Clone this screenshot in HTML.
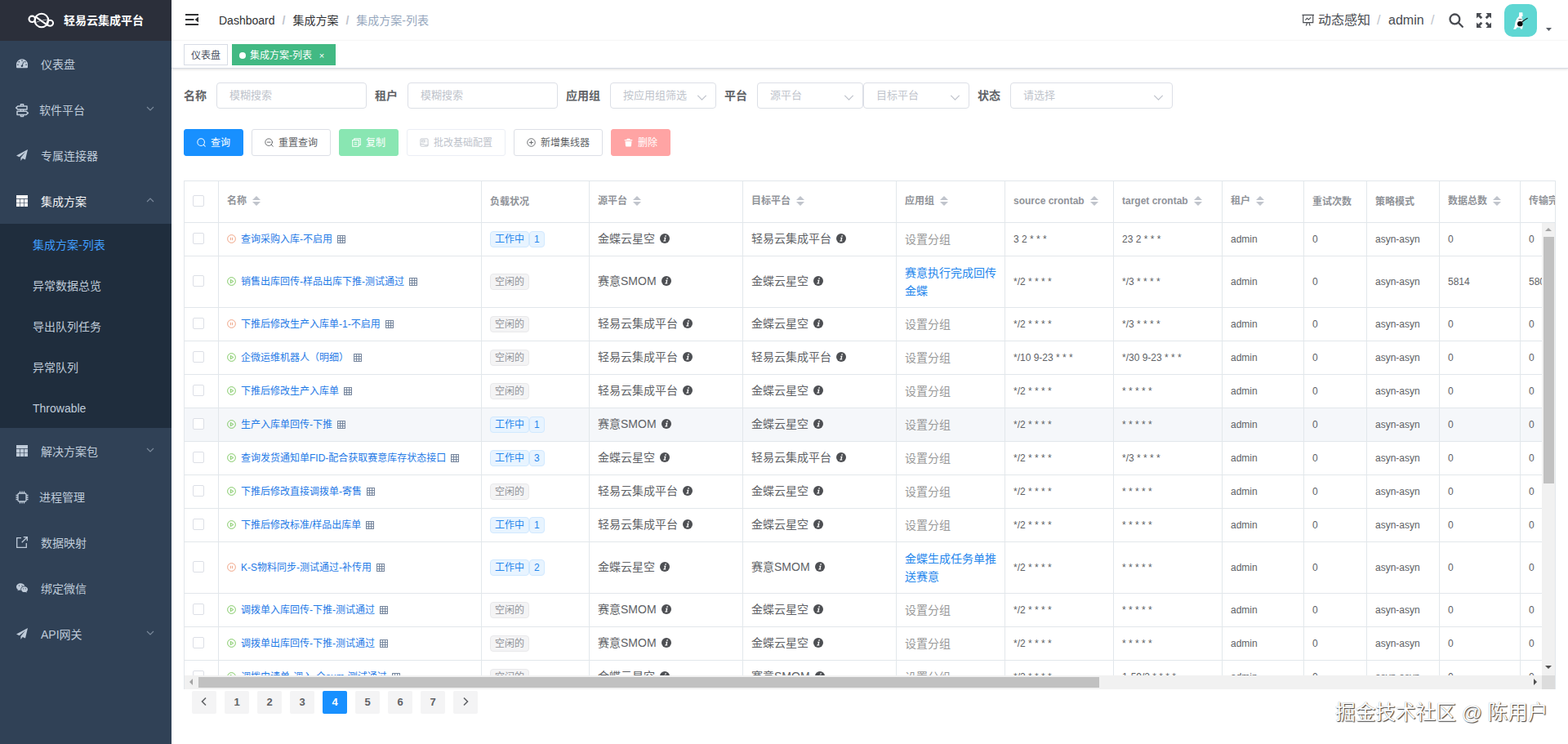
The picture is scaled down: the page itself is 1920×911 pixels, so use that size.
<!DOCTYPE html>
<html lang="zh-CN"><head><meta charset="utf-8"><title>轻易云集成平台 - 集成方案-列表</title>
<style>
*{box-sizing:border-box}
html,body{margin:0;padding:0}
body{width:1920px;height:911px;overflow:hidden;background:#fff;position:relative;
 font-family:"Liberation Sans","Noto Sans CJK SC",sans-serif;font-size:14px;color:#606266}
a{text-decoration:none;color:#1890ff}
svg.ic{display:inline-block;fill:currentColor;stroke:none;overflow:visible}
.hide{position:absolute;width:0;height:0;overflow:hidden}

/* ---------- sidebar ---------- */
.side{position:absolute;left:0;top:0;width:210px;height:911px;background:#304156}
.logo{height:50px;background:#2b2f3a;position:relative}
.logo svg{position:absolute;left:34px;top:13px;width:32px;height:24px}
.logo h1{position:absolute;left:78px;top:0;margin:0;font-size:14px;font-weight:700;color:#fff;line-height:50px;white-space:nowrap}
.mi{height:56px;line-height:56px;position:relative;color:#bfcbd9;font-size:14px;white-space:nowrap}
.mi .t{position:absolute;left:50px;top:1px}
.mi.el .t{left:48px}
.mi svg.ic{position:absolute;left:20px;top:21px;width:14px;height:14px}
.mi.el svg.ic{left:18px;top:19.5px;width:18px;height:18px}
.mi .ar{position:absolute;left:179px;top:22px;width:10px;height:10px}
.mi .ar svg{display:block;width:10px;height:10px;fill:none;stroke:#7c8a9c;stroke-width:1.1}
.mi.act{color:#f4f4f5}
.sub{background:#1f2d3d}
.si{height:50px;line-height:52px;padding-left:40px;color:#bfcbd9;font-size:14px;white-space:nowrap}
.si.on{color:#409eff}

/* ---------- navbar ---------- */
.nav{position:absolute;left:210px;top:0;width:1710px;height:50px;background:#fff;box-shadow:0 1px 4px rgba(0,21,41,.08)}
.nav .ham{position:absolute;left:17px;top:17px;width:16px;height:14px;color:#303133}
.bc{position:absolute;left:58px;top:0;line-height:50px;font-size:14px;white-space:nowrap;color:#303133}
.bc .sp{margin:0 9px;color:#c0c4cc;font-weight:700}
.bc .last{color:#97a8be}
.nr{position:absolute;right:0;top:0;height:50px;width:340px;color:#494c52;font-size:16px;line-height:50px;white-space:nowrap}
.nr span,.nr svg,.nr div{position:absolute}
.nr .sl{color:#c0c4cc}
.avatar{left:132px;top:5px;width:40px;height:40px;border-radius:10px;background:#5fd7d3;overflow:hidden}

/* ---------- tags ---------- */
.tags{position:absolute;left:210px;top:50px;width:1710px;height:34px;background:#fff;border-bottom:1px solid #d8dce5;box-shadow:0 1px 3px 0 rgba(0,0,0,.12),0 0 3px 0 rgba(0,0,0,.04)}
.tg{position:absolute;top:4px;height:26px;line-height:26px;border:1px solid #d8dce5;color:#495060;background:#fff;padding:0 8px;font-size:12px;white-space:nowrap}
.tg.on{background:#42b983;color:#fff;border-color:#42b983}
.tg.on:before{content:"";display:inline-block;width:8px;height:8px;border-radius:50%;background:#fff;margin-right:5px;position:relative;top:0}
.tg .x{display:inline-block;width:16px;text-align:center;margin-left:4px;font-size:11px;position:relative;top:0}

/* ---------- filters ---------- */
.lb{position:absolute;top:101px;height:32px;line-height:32px;font-size:14px;font-weight:700;color:#606266;white-space:nowrap}
.inp{position:absolute;top:101px;height:32px;border:1px solid #dcdfe6;border-radius:4px;background:#fff;padding:0 15px;line-height:30px;font-size:13px;color:#c0c4cc;white-space:nowrap;overflow:hidden}
.inp svg{position:absolute;right:10px;top:11px;width:13px;height:13px;fill:none;stroke:#c0c4cc;stroke-width:1}

/* ---------- buttons ---------- */
.btn{position:absolute;top:158px;height:33px;border:1px solid #dcdfe6;border-radius:3px;background:#fff;color:#606266;font-size:12px;line-height:33px;padding:0 15px;white-space:nowrap}
.btn svg.ic{width:11px;height:11px;vertical-align:-1px;margin-right:6px}
.btn.pri{background:#1890ff;border-color:#1890ff;color:#fff}
.btn.suc{background:#89e6b2;border-color:#89e6b2;color:#fff}
.btn.dan{background:#ffa4a4;border-color:#ffa4a4;color:#fff}
.btn.dis{border-color:#ebeef5;color:#c0c4cc}

/* ---------- table ---------- */
.tbl{position:absolute;left:225px;top:221px;width:1680px;height:623px;border:1px solid #e2e7eb;border-bottom:0;overflow:hidden;font-size:12px;color:#606266;background:#fff}
.tbl table{border-collapse:separate;border-spacing:0;table-layout:fixed;width:1746px}
.thead{position:absolute;left:0;top:0;width:1678px;height:51px;overflow:hidden}
.tbody{position:absolute;left:0;top:51px;width:1662px;height:554px;overflow:hidden}
.tbl th,.tbl td{border-right:1px solid #e2e7eb;border-bottom:1px solid #e2e7eb;padding:0;text-align:left;vertical-align:middle;font-weight:400}
.tbl th{height:51px;color:#909399;font-weight:700}
.tbl .cell{padding:0 10px;line-height:23px;white-space:nowrap;overflow:hidden}
.tbl th .cell{line-height:34px;height:34px}
.tbl th .cell.s{position:relative;top:-1px}
.tbl tr.hov td{background:#f5f7fa}
.sel{text-align:center}
.cb{display:block;width:14px;height:14px;border:1px solid #dcdfe6;border-radius:2px;background:#fff;margin-left:10px;position:relative;top:-1px}
.caret{display:inline-block;position:relative;width:24px;height:34px;vertical-align:middle}
.caret i{position:absolute;left:7px;width:0;height:0;border:5px solid transparent}
.caret .up{border-bottom-color:#c0c4cc;top:5px}
.caret .down{border-top-color:#c0c4cc;bottom:7px}
.nm a{color:#1f7ae6}
.nm svg.pause,.nm svg.play{width:11px;height:11px;vertical-align:-1px;margin-right:6px}
.nm svg.pause{color:#ee9a78}
.nm svg.play{color:#74c455}
.nm svg.grid{width:10px;height:10px;vertical-align:-1px;margin-left:6px;color:#71829a}
.tag{display:inline-block;height:20px;line-height:18px;padding:0 5px;font-size:12px;border:1px solid;border-radius:4px;vertical-align:middle}
.tag.blue{background:#e8f4ff;border-color:#d1e9ff;color:#2486ec}
.tag.blue.n{margin-left:0}
.tag.gray{background:#f4f4f5;border-color:#e9e9eb;color:#909399}
.pf{font-size:14px;position:relative;top:-1px}
.pf svg.info{width:12px;height:12px;vertical-align:-1px;margin-left:6px;color:#4d4f53}
.grp{font-size:14px;line-height:22px!important;white-space:normal!important}
.grp.none{color:#999}
.grp a{color:#2486ec}
.vsb{position:absolute;right:0;top:51px;width:16px;height:555px;background:#f1f1f1}
.vsb b{position:absolute;left:2px;top:17px;width:13px;height:302px;background:#c1c1c1}
.hsb{position:absolute;left:0;bottom:0;height:17px;width:1662px;background:#f1f1f1}
.hsb b{position:absolute;left:17px;top:2px;height:13px;width:1103px;background:#c1c1c1}
.corner{position:absolute;right:0;bottom:0;width:16px;height:17px;background:#dcdcdc}
.vsb i,.hsb i{position:absolute;width:0;height:0;border:4px solid transparent}
.au{left:4px;top:2px;border-bottom-color:#a3a3a3!important;border-bottom-width:4px}
.ad{left:4px;bottom:5px;border-top-color:#505050!important}
.al{left:2px;top:4px;border-right-color:#a3a3a3!important}
.sar{right:2px;top:4px;border-left-color:#505050!important}

/* ---------- pagination ---------- */
.pager{position:absolute;left:235px;top:846px;height:28px;white-space:nowrap;font-size:0}
.pg{display:inline-block;width:30px;height:28px;line-height:28px;margin-right:10px;background:#f4f4f5;color:#606266;border-radius:2px;text-align:center;font-size:13px;font-weight:700;vertical-align:top}
.pg.on{background:#1890ff;color:#fff}
.pg svg.arr{width:12px;height:12px;vertical-align:-1px;fill:none;stroke:#606266;stroke-width:1.6}

.wm{position:absolute;left:1635px;top:857px;font-size:24.65px;line-height:32px;color:#fff;white-space:nowrap;text-shadow:1px 1px 1px rgba(0,0,0,.75),0 0 1px rgba(0,0,0,.4)}
</style></head><body>
<svg class="hide" aria-hidden="true">
<symbol id="i-dash" viewBox="0 0 14 14"><path fill-rule="evenodd" d="M7 1.2a7 7 0 0 1 7 7v3.1a1 1 0 0 1-1 1H1a1 1 0 0 1-1-1V8.2a7 7 0 0 1 7-7zM7 2.3a.8.8 0 1 0 0 1.6.8.8 0 0 0 0-1.6zM3.3 3.9a.8.8 0 1 0 0 1.6.8.8 0 0 0 0-1.6zM10.7 3.9a.8.8 0 1 0 0 1.6.8.8 0 0 0 0-1.6zM1.9 7.4a.8.8 0 1 0 0 1.6.8.8 0 0 0 0-1.6zM12.1 7.4a.8.8 0 1 0 0 1.6.8.8 0 0 0 0-1.6zM8.6 4.2 7 8.4a1.3 1.3 0 1 0 .9.4l1.4-4.3z"/></symbol>
<symbol id="i-guide" viewBox="0 0 18 18"><g fill="none" stroke="currentColor" stroke-width="1.5" stroke-linejoin="round"><path d="M7.4 3.6V1.8h3.2v1.8M4 3.9h11v4.2H4L1.6 6zM7.4 8.4v1.7M10.6 8.4v1.7M3 10.3h11l2.4 2.1-2.4 2.1H3zM7.4 14.7v1.7h3.2v-1.7"/></g></symbol>
<symbol id="i-plane" viewBox="0 0 14 14"><path d="M14 0 0 7.6l3.6 1.6L11.2 3 5.4 10v4l2.3-2.9 3.3 1.5z"/></symbol>
<symbol id="i-table" viewBox="0 0 14 14"><path d="M0 0h14v4H0zM0 4.700h4.300v4.300H0zM4.900 4.700h4.200v4.300H4.900zM9.700 4.700H14v4.300H9.700zM0 9.600h4.300V14H0zM4.900 9.600h4.200V14H4.900zM9.700 9.600H14V14H9.700z"/></symbol>
<symbol id="i-cpu" viewBox="0 0 18 18"><g fill="none" stroke="currentColor" stroke-width="1.3"><rect x="4" y="4" width="10" height="10" rx="1.6"/><path d="M6.500 1.500V4M9 1.500V4M11.500 1.500V4M6.500 14v2.500M9 14v2.500M11.500 14v2.500M1.500 6.500H4M1.500 9H4M1.500 11.500H4M14 6.500h2.500M14 9h2.500M14 11.500h2.500"/></g></symbol>
<symbol id="i-link" viewBox="0 0 14 14"><g fill="none" stroke="currentColor" stroke-width="1.3"><path d="M6 1.700H.7v11.600h11.600V8M8.700.7h4.600v4.600M13.300.7 6.700 7.300"/></g></symbol>
<symbol id="i-wechat" viewBox="0 0 14 14"><path fill-rule="evenodd" d="M5.200 1.200C2.300 1.200 0 3.100 0 5.500c0 1.400.8 2.600 2 3.400L1.500 10.400l1.800-.9c.6.200 1.200.3 1.900.3h.3a3.900 3.900 0 0 1-.2-1.100c0-2.300 2.100-4.100 4.700-4.100h.4C9.900 2.600 7.800 1.200 5.200 1.200zM3.500 3.400a.7.7 0 1 1 0 1.400.7.700 0 0 1 0-1.400zM7 3.400a.7.700 0 1 1 0 1.400.7.700 0 0 1 0-1.400zM10 5.300c-2.200 0-4 1.500-4 3.400s1.800 3.400 4 3.400c.5 0 .9-.1 1.400-.2l1.400.8-.4-1.300c1-.6 1.600-1.600 1.600-2.700 0-1.900-1.800-3.400-4-3.400zM8.700 7.200a.6.600 0 1 1 0 1.200.6.600 0 0 1 0-1.200zM11.300 7.200a.6.600 0 1 1 0 1.200.6.600 0 0 1 0-1.200z"/></symbol>
<symbol id="i-down" viewBox="0 0 10 10"><path d="M1 3l4 4 4-4"/></symbol>
<symbol id="i-up" viewBox="0 0 10 10"><path d="M1 7l4-4 4 4"/></symbol>
<symbol id="i-left" viewBox="0 0 12 12"><path d="M8 1.500 3.500 6 8 10.500"/></symbol>
<symbol id="i-right" viewBox="0 0 12 12"><path d="M4 1.500 8.500 6 4 10.500"/></symbol>
<symbol id="i-ham" viewBox="0 0 16 14"><path d="M0 0h16v2H0zM0 6h10.500v2H0zM0 12h16v2H0zM16 3.400v7.200L11.600 7z"/></symbol>
<symbol id="i-data" viewBox="0 0 16 16"><g fill="none" stroke="currentColor" stroke-width="1.200"><path d="M.5 1.500h15M1.800 1.500v9.500h12.400V1.500M5.500 15l1.500-4M10.500 15 9 11M4.500 7.800l2.200-2.300 2 1.800 2.800-2.800"/></g></symbol>
<symbol id="i-search" viewBox="0 0 18 18"><g fill="none" stroke="currentColor" stroke-width="2.300" stroke-linecap="round"><circle cx="7.400" cy="7.400" r="5.900"/><path d="M11.800 11.800l5 5"/></g></symbol>
<symbol id="i-full" viewBox="0 0 18 18"><path d="M0 0h6.500L4.200 2.300l3 3-2 2-3-3L0 6.500zM18 0v6.500l-2.300-2.300-3 3-2-2 3-3L11.500 0zM0 18v-6.500l2.300 2.300 3-3 2 2-3 3L6.500 18zM18 18h-6.500l2.300-2.300-3-3 2-2 3 3 2.200-2.200z"/></symbol>
<symbol id="i-bsearch" viewBox="0 0 12 12"><g fill="none" stroke="currentColor" stroke-width="1.100" stroke-linecap="round"><circle cx="5.600" cy="5.600" r="4.700"/><path d="M9.200 9.200l2 2"/></g></symbol>
<symbol id="i-zoomout" viewBox="0 0 12 12"><g fill="none" stroke="currentColor" stroke-width="1" stroke-linecap="round"><circle cx="5.600" cy="5.600" r="4.700"/><path d="M9.200 9.200l2 2M3.600 5.600h4"/></g></symbol>
<symbol id="i-copy" viewBox="0 0 12 12"><g fill="none" stroke="currentColor" stroke-width="1.100"><path d="M3 2.800V.8h8.200v8.400H9.200M.8 2.800H9v8.400H.8zM3 5.800h3.800M3 8.200h3.800"/></g></symbol>
<symbol id="i-pic" viewBox="0 0 12 12"><g fill="none" stroke="currentColor" stroke-width="1"><rect x="1" y="1" width="10" height="10" rx="1.200"/><rect x="3" y="3" width="3.600" height="2.400"/><path d="M1 8.200h4.500l1.500 1.300h4M8.500 4.200h.8"/></g></symbol>
<symbol id="i-cplus" viewBox="0 0 12 12"><g fill="none" stroke="currentColor" stroke-width="1"><circle cx="6" cy="6" r="5.200"/><path d="M6 3.400v5.200M3.400 6h5.200"/></g></symbol>
<symbol id="i-trash" viewBox="0 0 12 12"><path d="M4.200.8h3.600l.5 1.400h2.900v1.300H.8V2.200h2.900zM1.700 4.300h8.600l-.5 6.300a1 1 0 0 1-1 .9H3.200a1 1 0 0 1-1-.9z"/></symbol>
<symbol id="i-pause" viewBox="0 0 12 12"><g fill="none" stroke="currentColor" stroke-width="1"><circle cx="6" cy="6" r="5.300"/><path d="M4.800 4.200v3.600M7.200 4.200v3.600"/></g></symbol>
<symbol id="i-play" viewBox="0 0 12 12"><g fill="none" stroke="currentColor" stroke-width="1" stroke-linejoin="round"><circle cx="6" cy="6" r="5.300"/><path d="M4.700 3.700v4.600L8.500 6z"/></g></symbol>
<symbol id="i-grid" viewBox="0 0 11 11"><g fill="none" stroke="currentColor" stroke-width="1.100"><rect x=".6" y=".6" width="9.800" height="9.800"/><path d="M4 .6v9.800M7.300 .6v9.800M.6 4h9.800M.6 7.300h9.800"/></g></symbol>
<symbol id="i-info" viewBox="0 0 14 14"><circle cx="7" cy="7" r="7"/><path fill="#fff" d="M7.600 2.600h1.700l-.4 1.700H7.200zM6.100 5.400h2.700l-1.100 4.500h1l-.3 1.300H4.800l.3-1.300h1l.8-3.200h-1z"/></symbol>
<symbol id="i-logo" viewBox="0 0 32 24"><g fill="none" stroke="#fff" stroke-width="2.1" stroke-linecap="round"><circle cx="16.900" cy="12" r="8.300"/><ellipse cx="5.300" cy="10.300" rx="3.800" ry="3.700"/><ellipse cx="27.300" cy="15.200" rx="3.700" ry="3.500"/><path d="M9.800 7.600 23.800 17.600" stroke-width="2"/><path d="M8.800 14.800 15 12.700M18.500 11.600l6.500-.5" stroke-width="1" opacity=".6"/></g></symbol>
</svg>
<div class="side">
<div class="logo"><svg><use href="#i-logo"/></svg><h1>轻易云集成平台</h1></div>
<div class="mi"><svg class="ic"><use href="#i-dash"/></svg><span class="t">仪表盘</span></div>
<div class="mi el"><svg class="ic"><use href="#i-guide"/></svg><span class="t">软件平台</span><span class="ar"><svg><use href="#i-down"/></svg></span></div>
<div class="mi"><svg class="ic"><use href="#i-plane"/></svg><span class="t">专属连接器</span></div>
<div class="mi act"><svg class="ic"><use href="#i-table"/></svg><span class="t">集成方案</span><span class="ar"><svg><use href="#i-up"/></svg></span></div>
<div class="sub">
<div class="si on">集成方案-列表</div>
<div class="si">异常数据总览</div>
<div class="si">导出队列任务</div>
<div class="si">异常队列</div>
<div class="si">Throwable</div>
</div>
<div class="mi"><svg class="ic"><use href="#i-table"/></svg><span class="t">解决方案包</span><span class="ar"><svg><use href="#i-down"/></svg></span></div>
<div class="mi el"><svg class="ic"><use href="#i-cpu"/></svg><span class="t">进程管理</span></div>
<div class="mi"><svg class="ic"><use href="#i-link"/></svg><span class="t">数据映射</span></div>
<div class="mi"><svg class="ic"><use href="#i-wechat"/></svg><span class="t">绑定微信</span></div>
<div class="mi"><svg class="ic"><use href="#i-plane"/></svg><span class="t">API网关</span><span class="ar"><svg><use href="#i-down"/></svg></span></div>
</div>
<div class="nav">
<svg class="ic ham"><use href="#i-ham"/></svg>
<div class="bc">Dashboard<span class="sp">/</span>集成方案<span class="sp">/</span><span class="last">集成方案-列表</span></div>
<div class="nr">
<svg class="ic" style="left:13.500px;top:16.500px;width:15.500px;height:15.500px"><use href="#i-data"/></svg>
<span style="left:34px">动态感知</span>
<span class="sl" style="left:106px">/</span>
<span style="left:120px">admin</span>
<span class="sl" style="left:172px">/</span>
<svg class="ic" style="left:194px;top:16px;width:18px;height:18px"><use href="#i-search"/></svg>
<svg class="ic" style="left:228px;top:16px;width:18px;height:18px"><use href="#i-full"/></svg>
<div class="avatar" style="left:262px"><svg viewBox="0 0 40 40" width="40" height="40"><path fill="#fff" d="M18.200 10.200h4.100l.4 4.200-1.600 1.100 1.300 3.500.2 8-.5 3.500h-2.200l-.3-2h-4l-1.500 2.300h-3.100l1.500-2.800 1-6 2-4.500 2.500-2.500z"/><ellipse cx="19.300" cy="24.200" rx="3.300" ry="3.100" fill="#0a0a0a"/><path d="M21.500 22l3.500-2.600 3.600-2.300" stroke="#0a0a0a" stroke-width="1.100" fill="none"/><path d="M17.500 18.700h4" stroke="#0a0a0a" stroke-width=".7" fill="none"/></svg></div>
<svg style="left:312.500px;top:34px;width:7px;height:4px" viewBox="0 0 7 4"><path d="M0 0h7L3.500 4z" fill="#5a5e66"/></svg>
</div>
</div>
<div class="tags">
<span class="tg" style="left:15px">仪表盘</span>
<span class="tg on" style="left:74px;width:127px">集成方案-列表<span class="x">×</span></span>
</div>
<div class="lb" style="left:225px">名称</div><div class="inp" style="left:265px;width:184px">模糊搜索</div>
<div class="lb" style="left:459px">租户</div><div class="inp" style="left:499px;width:184px">模糊搜索</div>
<div class="lb" style="left:693px">应用组</div><div class="inp" style="left:747px;width:130px">按应用组筛选<svg><use href="#i-down"/></svg></div>
<div class="lb" style="left:887px">平台</div><div class="inp" style="left:927px;width:130px">源平台<svg><use href="#i-down"/></svg></div>
<div class="inp" style="left:1057px;width:130px">目标平台<svg><use href="#i-down"/></svg></div>
<div class="lb" style="left:1197px">状态</div><div class="inp" style="left:1237px;width:199px">请选择<svg><use href="#i-down"/></svg></div>
<div class="btn pri" style="left:225px;width:73px"><svg class="ic"><use href="#i-bsearch"/></svg>查询</div>
<div class="btn" style="left:308px;width:97px"><svg class="ic"><use href="#i-zoomout"/></svg>重置查询</div>
<div class="btn suc" style="left:415px;width:73px"><svg class="ic"><use href="#i-copy"/></svg>复制</div>
<div class="btn dis" style="left:498px;width:121px"><svg class="ic"><use href="#i-pic"/></svg>批改基础配置</div>
<div class="btn" style="left:629px;width:109px"><svg class="ic"><use href="#i-cplus"/></svg>新增集线器</div>
<div class="btn dan" style="left:748px;width:73px"><svg class="ic"><use href="#i-trash"/></svg>删除</div>
<div class="tbl">
<div class="thead"><table><colgroup><col style="width:42px"><col style="width:322px"><col style="width:132px"><col style="width:188px"><col style="width:188px"><col style="width:133px"><col style="width:133px"><col style="width:133px"><col style="width:100px"><col style="width:77px"><col style="width:89px"><col style="width:99px"><col style="width:110px"></colgroup><tr><th class="sel"><span class="cb"></span></th><th><div class="cell s">名称<span class="caret"><i class="up"></i><i class="down"></i></span></div></th><th><div class="cell">负载状况</div></th><th><div class="cell s">源平台<span class="caret"><i class="up"></i><i class="down"></i></span></div></th><th><div class="cell s">目标平台<span class="caret"><i class="up"></i><i class="down"></i></span></div></th><th><div class="cell s">应用组<span class="caret"><i class="up"></i><i class="down"></i></span></div></th><th><div class="cell s">source crontab<span class="caret"><i class="up"></i><i class="down"></i></span></div></th><th><div class="cell s">target crontab<span class="caret"><i class="up"></i><i class="down"></i></span></div></th><th><div class="cell s">租户<span class="caret"><i class="up"></i><i class="down"></i></span></div></th><th><div class="cell">重试次数</div></th><th><div class="cell">策略模式</div></th><th><div class="cell s">数据总数<span class="caret"><i class="up"></i><i class="down"></i></span></div></th><th><div class="cell s">传输完成<span class="caret"><i class="up"></i><i class="down"></i></span></div></th></tr></table></div>
<div class="tbody"><table><colgroup><col style="width:42px"><col style="width:322px"><col style="width:132px"><col style="width:188px"><col style="width:188px"><col style="width:133px"><col style="width:133px"><col style="width:133px"><col style="width:100px"><col style="width:77px"><col style="width:89px"><col style="width:99px"><col style="width:110px"></colgroup>
<tr class="" style="height:41px"><td class="sel"><span class="cb"></span></td><td><div class="cell nm"><svg class="ic pause"><use href="#i-pause"/></svg><a>查询采购入库-不启用</a><svg class="ic grid"><use href="#i-grid"/></svg></div></td><td><div class="cell"><span class="tag blue">工作中</span><span class="tag blue n">1</span></div></td><td><div class="cell pf">金蝶云星空<svg class="ic info"><use href="#i-info"/></svg></div></td><td><div class="cell pf">轻易云集成平台<svg class="ic info"><use href="#i-info"/></svg></div></td><td><div class="cell grp none">设置分组</div></td><td><div class="cell">3 2 * * *</div></td><td><div class="cell">23 2 * * *</div></td><td><div class="cell">admin</div></td><td><div class="cell">0</div></td><td><div class="cell">asyn-asyn</div></td><td><div class="cell">0</div></td><td><div class="cell">0</div></td></tr>
<tr class="" style="height:63px"><td class="sel"><span class="cb"></span></td><td><div class="cell nm"><svg class="ic play"><use href="#i-play"/></svg><a>销售出库回传-样品出库下推-测试通过</a><svg class="ic grid"><use href="#i-grid"/></svg></div></td><td><div class="cell"><span class="tag gray">空闲的</span></div></td><td><div class="cell pf">赛意SMOM<svg class="ic info"><use href="#i-info"/></svg></div></td><td><div class="cell pf">金蝶云星空<svg class="ic info"><use href="#i-info"/></svg></div></td><td><div class="cell grp"><a>赛意执行完成回传<br>金蝶</a></div></td><td><div class="cell">*/2 * * * *</div></td><td><div class="cell">*/3 * * * *</div></td><td><div class="cell">admin</div></td><td><div class="cell">0</div></td><td><div class="cell">asyn-asyn</div></td><td><div class="cell">5814</div></td><td><div class="cell">5806</div></td></tr>
<tr class="" style="height:41px"><td class="sel"><span class="cb"></span></td><td><div class="cell nm"><svg class="ic pause"><use href="#i-pause"/></svg><a>下推后修改生产入库单-1-不启用</a><svg class="ic grid"><use href="#i-grid"/></svg></div></td><td><div class="cell"><span class="tag gray">空闲的</span></div></td><td><div class="cell pf">轻易云集成平台<svg class="ic info"><use href="#i-info"/></svg></div></td><td><div class="cell pf">金蝶云星空<svg class="ic info"><use href="#i-info"/></svg></div></td><td><div class="cell grp none">设置分组</div></td><td><div class="cell">*/2 * * * *</div></td><td><div class="cell">*/3 * * * *</div></td><td><div class="cell">admin</div></td><td><div class="cell">0</div></td><td><div class="cell">asyn-asyn</div></td><td><div class="cell">0</div></td><td><div class="cell">0</div></td></tr>
<tr class="" style="height:41px"><td class="sel"><span class="cb"></span></td><td><div class="cell nm"><svg class="ic play"><use href="#i-play"/></svg><a>企微运维机器人（明细）</a><svg class="ic grid"><use href="#i-grid"/></svg></div></td><td><div class="cell"><span class="tag gray">空闲的</span></div></td><td><div class="cell pf">轻易云集成平台<svg class="ic info"><use href="#i-info"/></svg></div></td><td><div class="cell pf">轻易云集成平台<svg class="ic info"><use href="#i-info"/></svg></div></td><td><div class="cell grp none">设置分组</div></td><td><div class="cell">*/10 9-23 * * *</div></td><td><div class="cell">*/30 9-23 * * *</div></td><td><div class="cell">admin</div></td><td><div class="cell">0</div></td><td><div class="cell">asyn-asyn</div></td><td><div class="cell">0</div></td><td><div class="cell">0</div></td></tr>
<tr class="" style="height:41px"><td class="sel"><span class="cb"></span></td><td><div class="cell nm"><svg class="ic play"><use href="#i-play"/></svg><a>下推后修改生产入库单</a><svg class="ic grid"><use href="#i-grid"/></svg></div></td><td><div class="cell"><span class="tag gray">空闲的</span></div></td><td><div class="cell pf">轻易云集成平台<svg class="ic info"><use href="#i-info"/></svg></div></td><td><div class="cell pf">金蝶云星空<svg class="ic info"><use href="#i-info"/></svg></div></td><td><div class="cell grp none">设置分组</div></td><td><div class="cell">*/2 * * * *</div></td><td><div class="cell">* * * * *</div></td><td><div class="cell">admin</div></td><td><div class="cell">0</div></td><td><div class="cell">asyn-asyn</div></td><td><div class="cell">0</div></td><td><div class="cell">0</div></td></tr>
<tr class="hov" style="height:41px"><td class="sel"><span class="cb"></span></td><td><div class="cell nm"><svg class="ic play"><use href="#i-play"/></svg><a>生产入库单回传-下推</a><svg class="ic grid"><use href="#i-grid"/></svg></div></td><td><div class="cell"><span class="tag blue">工作中</span><span class="tag blue n">1</span></div></td><td><div class="cell pf">赛意SMOM<svg class="ic info"><use href="#i-info"/></svg></div></td><td><div class="cell pf">金蝶云星空<svg class="ic info"><use href="#i-info"/></svg></div></td><td><div class="cell grp none">设置分组</div></td><td><div class="cell">*/2 * * * *</div></td><td><div class="cell">* * * * *</div></td><td><div class="cell">admin</div></td><td><div class="cell">0</div></td><td><div class="cell">asyn-asyn</div></td><td><div class="cell">0</div></td><td><div class="cell">0</div></td></tr>
<tr class="" style="height:41px"><td class="sel"><span class="cb"></span></td><td><div class="cell nm"><svg class="ic play"><use href="#i-play"/></svg><a>查询发货通知单FID-配合获取赛意库存状态接口</a><svg class="ic grid"><use href="#i-grid"/></svg></div></td><td><div class="cell"><span class="tag blue">工作中</span><span class="tag blue n">3</span></div></td><td><div class="cell pf">金蝶云星空<svg class="ic info"><use href="#i-info"/></svg></div></td><td><div class="cell pf">轻易云集成平台<svg class="ic info"><use href="#i-info"/></svg></div></td><td><div class="cell grp none">设置分组</div></td><td><div class="cell">*/2 * * * *</div></td><td><div class="cell">*/3 * * * *</div></td><td><div class="cell">admin</div></td><td><div class="cell">0</div></td><td><div class="cell">asyn-asyn</div></td><td><div class="cell">0</div></td><td><div class="cell">0</div></td></tr>
<tr class="" style="height:41px"><td class="sel"><span class="cb"></span></td><td><div class="cell nm"><svg class="ic play"><use href="#i-play"/></svg><a>下推后修改直接调拨单-寄售</a><svg class="ic grid"><use href="#i-grid"/></svg></div></td><td><div class="cell"><span class="tag gray">空闲的</span></div></td><td><div class="cell pf">轻易云集成平台<svg class="ic info"><use href="#i-info"/></svg></div></td><td><div class="cell pf">金蝶云星空<svg class="ic info"><use href="#i-info"/></svg></div></td><td><div class="cell grp none">设置分组</div></td><td><div class="cell">*/2 * * * *</div></td><td><div class="cell">* * * * *</div></td><td><div class="cell">admin</div></td><td><div class="cell">0</div></td><td><div class="cell">asyn-asyn</div></td><td><div class="cell">0</div></td><td><div class="cell">0</div></td></tr>
<tr class="" style="height:41px"><td class="sel"><span class="cb"></span></td><td><div class="cell nm"><svg class="ic play"><use href="#i-play"/></svg><a>下推后修改标准/样品出库单</a><svg class="ic grid"><use href="#i-grid"/></svg></div></td><td><div class="cell"><span class="tag blue">工作中</span><span class="tag blue n">1</span></div></td><td><div class="cell pf">轻易云集成平台<svg class="ic info"><use href="#i-info"/></svg></div></td><td><div class="cell pf">金蝶云星空<svg class="ic info"><use href="#i-info"/></svg></div></td><td><div class="cell grp none">设置分组</div></td><td><div class="cell">*/2 * * * *</div></td><td><div class="cell">* * * * *</div></td><td><div class="cell">admin</div></td><td><div class="cell">0</div></td><td><div class="cell">asyn-asyn</div></td><td><div class="cell">0</div></td><td><div class="cell">0</div></td></tr>
<tr class="" style="height:63px"><td class="sel"><span class="cb"></span></td><td><div class="cell nm"><svg class="ic pause"><use href="#i-pause"/></svg><a>K-S物料同步-测试通过-补传用</a><svg class="ic grid"><use href="#i-grid"/></svg></div></td><td><div class="cell"><span class="tag blue">工作中</span><span class="tag blue n">2</span></div></td><td><div class="cell pf">金蝶云星空<svg class="ic info"><use href="#i-info"/></svg></div></td><td><div class="cell pf">赛意SMOM<svg class="ic info"><use href="#i-info"/></svg></div></td><td><div class="cell grp"><a>金蝶生成任务单推<br>送赛意</a></div></td><td><div class="cell">*/2 * * * *</div></td><td><div class="cell">* * * * *</div></td><td><div class="cell">admin</div></td><td><div class="cell">0</div></td><td><div class="cell">asyn-asyn</div></td><td><div class="cell">0</div></td><td><div class="cell">0</div></td></tr>
<tr class="" style="height:41px"><td class="sel"><span class="cb"></span></td><td><div class="cell nm"><svg class="ic play"><use href="#i-play"/></svg><a>调拨单入库回传-下推-测试通过</a><svg class="ic grid"><use href="#i-grid"/></svg></div></td><td><div class="cell"><span class="tag gray">空闲的</span></div></td><td><div class="cell pf">赛意SMOM<svg class="ic info"><use href="#i-info"/></svg></div></td><td><div class="cell pf">金蝶云星空<svg class="ic info"><use href="#i-info"/></svg></div></td><td><div class="cell grp none">设置分组</div></td><td><div class="cell">*/2 * * * *</div></td><td><div class="cell">* * * * *</div></td><td><div class="cell">admin</div></td><td><div class="cell">0</div></td><td><div class="cell">asyn-asyn</div></td><td><div class="cell">0</div></td><td><div class="cell">0</div></td></tr>
<tr class="" style="height:41px"><td class="sel"><span class="cb"></span></td><td><div class="cell nm"><svg class="ic play"><use href="#i-play"/></svg><a>调拨单出库回传-下推-测试通过</a><svg class="ic grid"><use href="#i-grid"/></svg></div></td><td><div class="cell"><span class="tag gray">空闲的</span></div></td><td><div class="cell pf">赛意SMOM<svg class="ic info"><use href="#i-info"/></svg></div></td><td><div class="cell pf">金蝶云星空<svg class="ic info"><use href="#i-info"/></svg></div></td><td><div class="cell grp none">设置分组</div></td><td><div class="cell">*/2 * * * *</div></td><td><div class="cell">* * * * *</div></td><td><div class="cell">admin</div></td><td><div class="cell">0</div></td><td><div class="cell">asyn-asyn</div></td><td><div class="cell">0</div></td><td><div class="cell">0</div></td></tr>
<tr class="" style="height:41px"><td class="sel"><span class="cb"></span></td><td><div class="cell nm"><svg class="ic play"><use href="#i-play"/></svg><a>调拨申请单-调入-全sum-测试通过</a><svg class="ic grid"><use href="#i-grid"/></svg></div></td><td><div class="cell"><span class="tag gray">空闲的</span></div></td><td><div class="cell pf">金蝶云星空<svg class="ic info"><use href="#i-info"/></svg></div></td><td><div class="cell pf">赛意SMOM<svg class="ic info"><use href="#i-info"/></svg></div></td><td><div class="cell grp none">设置分组</div></td><td><div class="cell">*/2 * * * *</div></td><td><div class="cell">1-59/2 * * * *</div></td><td><div class="cell">admin</div></td><td><div class="cell">0</div></td><td><div class="cell">asyn-asyn</div></td><td><div class="cell">0</div></td><td><div class="cell">0</div></td></tr>
</table></div>
<div class="vsb"><i class="au"></i><b></b><i class="ad"></i></div><div class="hsb"><i class="al"></i><b></b><i class="sar"></i></div><div class="corner"></div></div>
<div class="pager"><span class="pg"><svg class="ic arr"><use href="#i-left"/></svg></span><span class="pg">1</span><span class="pg">2</span><span class="pg">3</span><span class="pg on">4</span><span class="pg">5</span><span class="pg">6</span><span class="pg">7</span><span class="pg"><svg class="ic arr"><use href="#i-right"/></svg></span></div>
<div class="wm">掘金技术社区 @ 陈用户</div>
</body></html>
